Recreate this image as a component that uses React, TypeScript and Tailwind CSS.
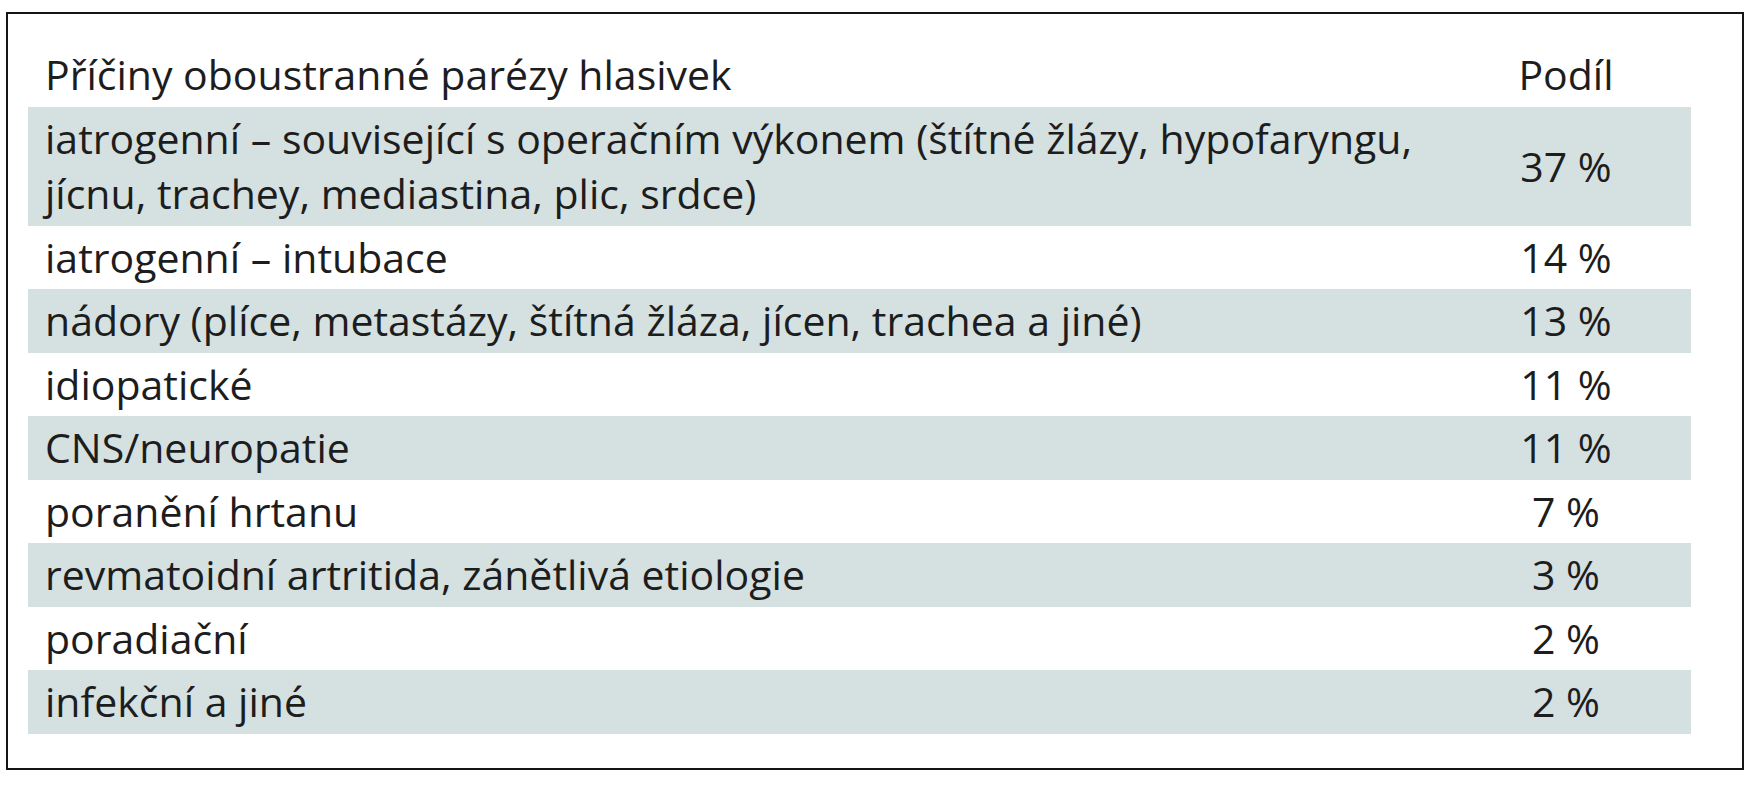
const rows: [string, string][] = [
  [
    'iatrogenní – související s operačním výkonem (štítné žlázy, hypofaryngu, jícnu, trachey, mediastina, plic, srdce)',
    '37 %',
  ],
  ['iatrogenní – intubace', '14 %'],
  ['nádory (plíce, metastázy, štítná žláza, jícen, trachea a jiné)', '13 %'],
  ['idiopatické', '11 %'],
  ['CNS/neuropatie', '11 %'],
  ['poranění hrtanu', '7 %'],
  ['revmatoidní artritida, zánětlivá etiologie', '3 %'],
  ['poradiační', '2 %'],
  ['infekční a jiné', '2 %'],
];

export default function App() {
  return (
    <div className="min-h-[800px] w-[1760px] bg-white pt-[12px] pl-[6px] font-['Open_Sans',sans-serif] text-[41px] leading-[55px] text-[#1d1d1d]">
      <div className="h-[758px] w-[1738px] border-2 border-[#151515] pt-[33px] pr-[51px] pl-[20px]">
        <table className="w-full border-collapse">
          <thead>
            <tr>
              <th className="pb-[5px] pl-[17px] text-left font-normal">
                Příčiny oboustranné parézy hlasivek
              </th>
              <th className="w-[250px] pb-[5px] text-center font-normal">Podíl</th>
            </tr>
          </thead>
          <tbody>
            {rows.map(([cause, share], i) => (
              <tr key={i} className={i % 2 === 0 ? 'bg-[#d5e0e1]' : 'bg-white'}>
                <td className="py-[4.25px] pl-[17px] align-middle">{cause}</td>
                <td className="py-[4.25px] text-center align-middle">{share}</td>
              </tr>
            ))}
          </tbody>
        </table>
      </div>
    </div>
  );
}
